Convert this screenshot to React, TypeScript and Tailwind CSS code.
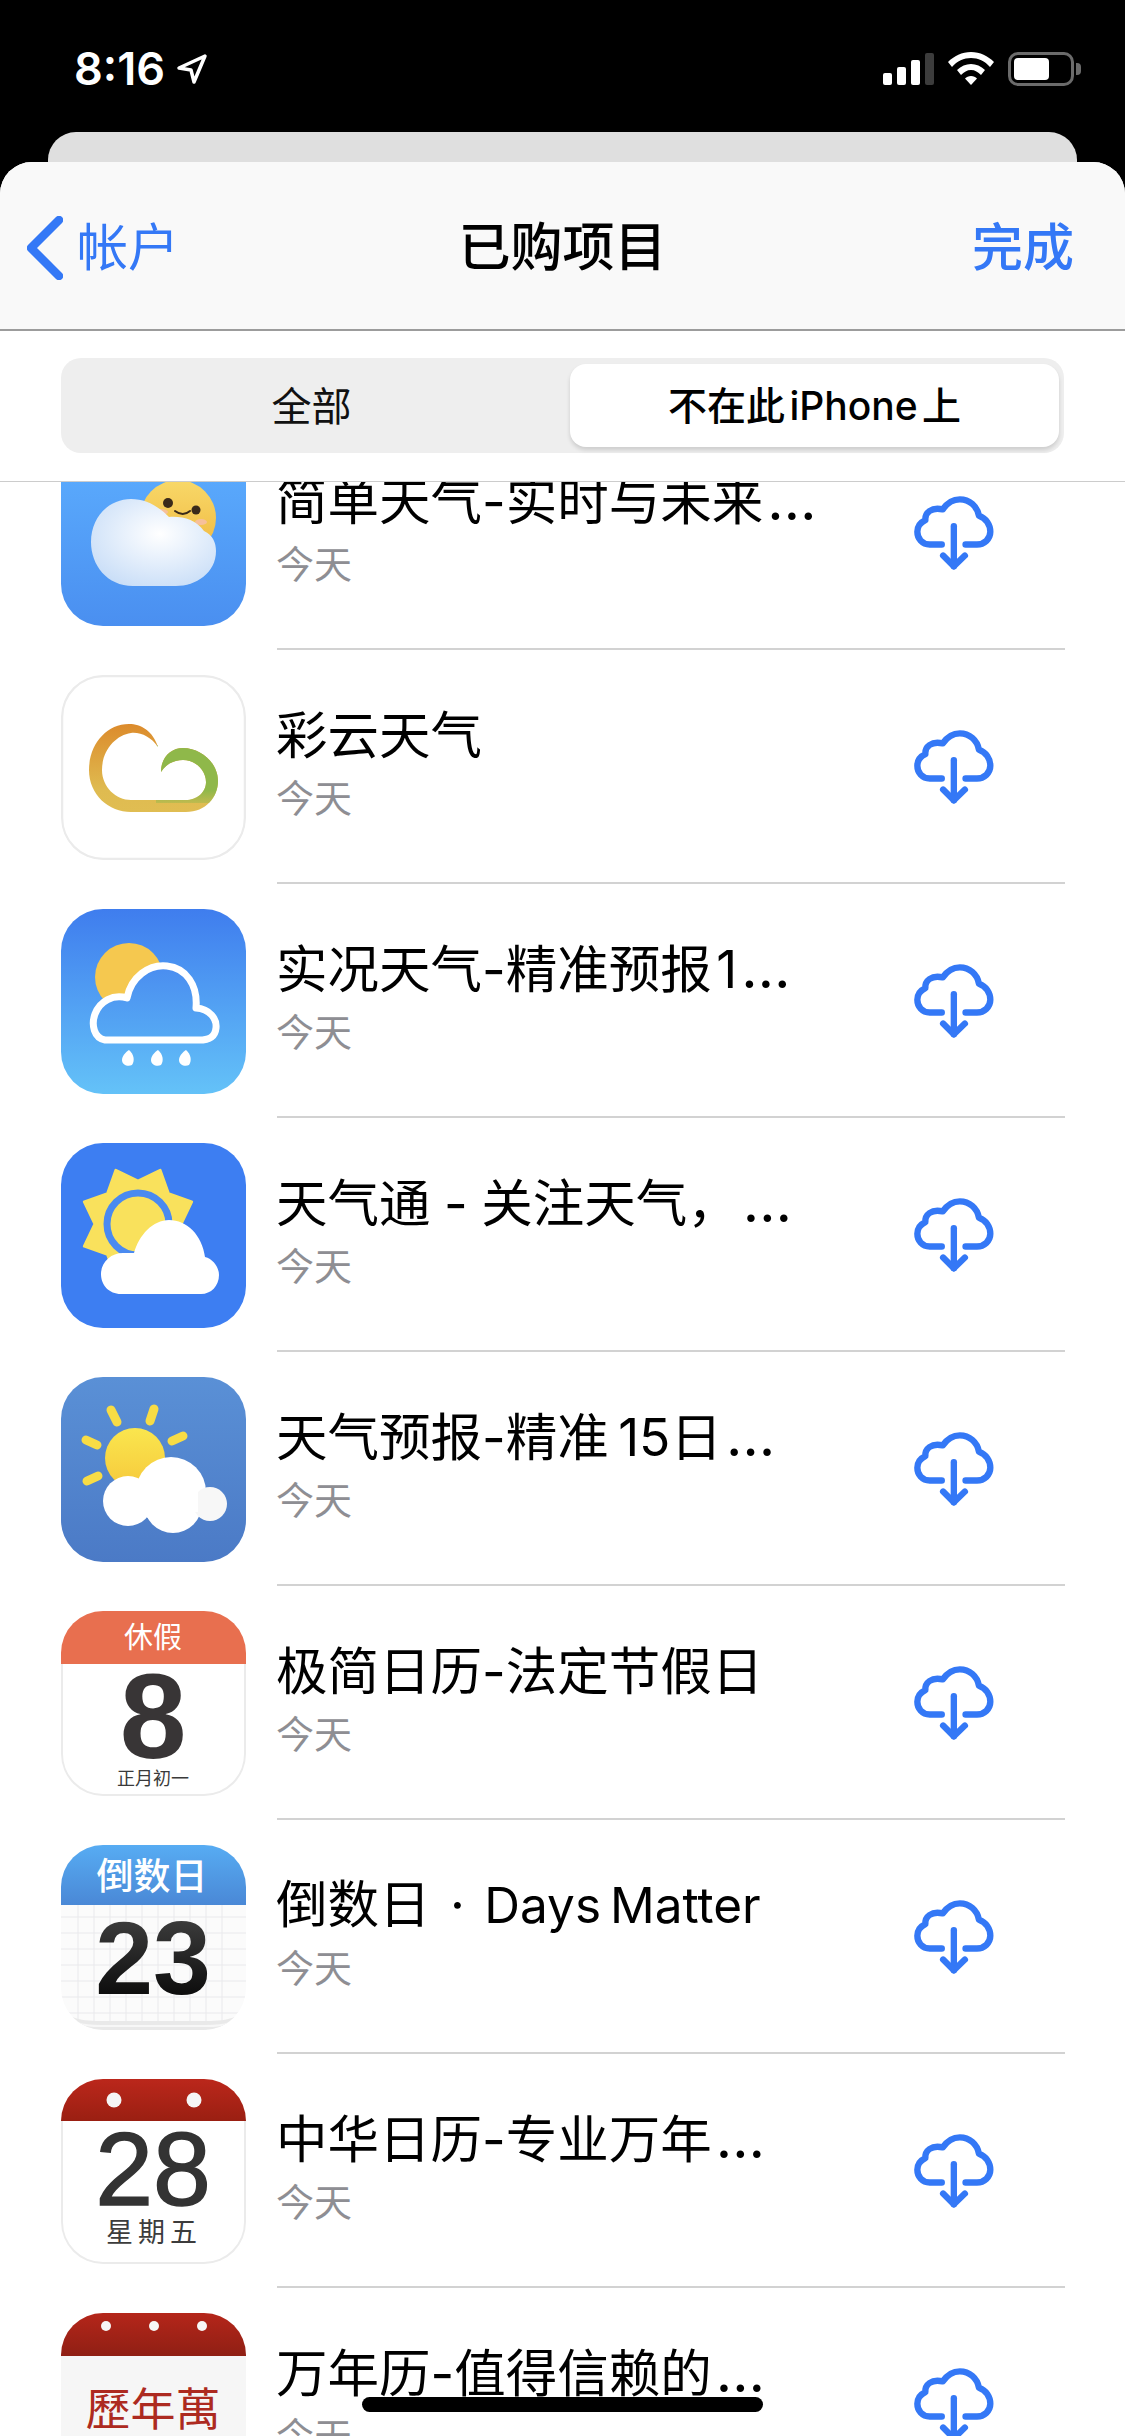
import React from "react";

const FONT = "Inter, 'Noto Sans CJK SC', sans-serif";
const CJK = "'Noto Sans CJK SC', sans-serif";
const LIB = "'Liberation Sans', sans-serif";

function Cloud3() {
  return (
    <path d="M44 131 C33 129 30 116 34 105 C39 92 52 85 66 89 C70 68 88 55 106 57 C125 59 137 76 135 99 C149 100 156 110 155 119 C154 129 147 131 138 131 Z" />
  );
}

function Edge({ top }: { top: number }) {
  return (
    <path d={`M0 ${top} L0 143 A42 42 0 0 0 42 185 L143 185 A42 42 0 0 0 185 143 L185 ${top}`} fill="none" stroke="#ebebeb" strokeWidth="4" />
  );
}

function Icon1() {
  return (
    <svg viewBox="0 0 185 185" className="w-full h-full block">
      <defs>
        <linearGradient id="i1" x1="0" y1="0" x2="0" y2="1"><stop offset="0" stopColor="#5dafff" /><stop offset="1" stopColor="#4a8ff0" /></linearGradient>
        <linearGradient id="i1s" x1="0" y1="0" x2="0" y2="1"><stop offset="0" stopColor="#f8d868" /><stop offset="1" stopColor="#f0b840" /></linearGradient>
        <radialGradient id="i1c" cx="0.55" cy="0.4" r="0.7"><stop offset="0" stopColor="#ffffff" /><stop offset="1" stopColor="#c6dcf7" /></radialGradient>
      </defs>
      <rect width="185" height="185" fill="url(#i1)" />
      <circle cx="117" cy="77" r="38" fill="url(#i1s)" />
      <circle cx="107" cy="62" r="5" fill="#3a2a1a" />
      <circle cx="135" cy="69" r="4.500" fill="#3a2a1a" />
      <path d="M114 70 Q122 76 129 70" fill="none" stroke="#3a2a1a" strokeWidth="2" strokeLinecap="round" />
      <ellipse cx="100" cy="71" rx="7" ry="3" fill="#f7c09a" />
      <ellipse cx="140" cy="81" rx="6" ry="3" fill="#f7c09a" />
      <path d="M30 101 C30 76 48 58 70 58 C84 58 96 64 108 76 C122 75 135 79 143 90 C152 94 155 102 155 110 C155 132 135 145 115 145 L72 145 C46 145 30 124 30 101 Z" fill="url(#i1c)" />
    </svg>
  );
}

function Icon2() {
  const d = "M97 72 C92 56 80 49 68 49 C45 49 28 70 28 95 C28 120 48 137 70 137 L125 137 C145 137 157 122 157 106 C157 88 140 73 122 73 C110 73 100 82 100 97 C106 88 114 85 122 85 C134 85 145 95 145 107 C145 118 135 125 125 125 L70 125 C55 125 41 112 41 95 C41 75 55 60 70 58 C80 57 90 62 97 72 Z";
  return (
    <svg viewBox="0 0 185 185" className="w-full h-full block">
      <defs>
        <linearGradient id="i2" x1="0" y1="0" x2="0" y2="1"><stop offset="0" stopColor="#dc8b2c" /><stop offset="0.75" stopColor="#dfbb50" /><stop offset="1" stopColor="#e0bd52" /></linearGradient>
        <linearGradient id="i2g" x1="0" y1="0" x2="0" y2="1"><stop offset="0" stopColor="#8fb84a" /><stop offset="0.75" stopColor="#8fb84a" /><stop offset="1" stopColor="#8fb84a" stopOpacity="0" /></linearGradient>
        <clipPath id="i2c"><rect x="95" y="70" width="70" height="58" /></clipPath>
      </defs>
      <rect width="185" height="185" fill="#fff" />
      <path d={d} fill="url(#i2)" />
      <g clipPath="url(#i2c)"><path d={d} fill="url(#i2g)" /></g>
      <rect x="1" y="1" width="183" height="183" rx="41" fill="none" stroke="#ebebeb" strokeWidth="2.500" />
    </svg>
  );
}

function Icon3() {
  const drop = (x: number) => `M${x} 141 C${x + 5} 145 ${x + 6} 152 ${x + 3} 156 C${x - 1} 158 ${x - 7} 156 ${x - 7} 151 C${x - 7} 147 ${x - 3} 143 ${x} 141 Z`;
  return (
    <svg viewBox="0 0 185 185" className="w-full h-full block">
      <defs>
        <linearGradient id="i3" x1="0" y1="0" x2="0" y2="1"><stop offset="0" stopColor="#3f7dee" /><stop offset="1" stopColor="#64c2f8" /></linearGradient>
        <linearGradient id="i3c" x1="0" y1="0" x2="0" y2="1"><stop offset="0" stopColor="#4a8df0" /><stop offset="1" stopColor="#56aaf4" /></linearGradient>
      </defs>
      <rect width="185" height="185" fill="url(#i3)" />
      <circle cx="68" cy="68" r="34" fill="#f5c84f" />
      <g fill="url(#i3c)" stroke="#fff" strokeWidth="7" strokeLinejoin="round"><Cloud3 /></g>
      <path d={drop(68)} fill="#fff" />
      <path d={drop(97)} fill="#fff" />
      <path d={drop(125)} fill="#fff" />
    </svg>
  );
}

function Icon4() {
  const pts: string[] = [];
  for (let i = 0; i < 16; i++) {
    const a = ((i * 22.5 - 112.5) * Math.PI) / 180;
    const r = i % 2 === 0 ? 58 : 43;
    pts.push(`${(77 + r * Math.cos(a)).toFixed(1)},${(81 + r * Math.sin(a)).toFixed(1)}`);
  }
  return (
    <svg viewBox="0 0 185 185" className="w-full h-full block">
      <rect width="185" height="185" fill="#3d7ef2" />
      <polygon points={pts.join(" ")} fill="#f9e15c" stroke="#f9e15c" strokeWidth="3" strokeLinejoin="round" />
      <circle cx="77" cy="81" r="31" fill="#f9e15c" stroke="#4a8af0" strokeWidth="7" />
      <path d="M60 151 C48 151 40 142 40 131 C40 119 50 110 62 110 L73 110 C78 92 92 77 108 77 C126 77 141 92 144 114 C152 116 158 124 158 132 C158 143 150 151 140 151 Z" fill="#fff" />
    </svg>
  );
}

function Icon5() {
  return (
    <svg viewBox="0 0 185 185" className="w-full h-full block">
      <defs>
        <linearGradient id="i5" x1="0" y1="0" x2="0" y2="1"><stop offset="0" stopColor="#5a90d6" /><stop offset="1" stopColor="#4b7ac6" /></linearGradient>
        <linearGradient id="i5s" x1="0" y1="0" x2="0" y2="1"><stop offset="0" stopColor="#fae64e" /><stop offset="1" stopColor="#f6c93c" /></linearGradient>
      </defs>
      <rect width="185" height="185" fill="url(#i5)" />
      <g stroke="#f8dc45" strokeWidth="9" strokeLinecap="round">
        <line x1="50" y1="33" x2="56" y2="45" />
        <line x1="93" y1="32" x2="89" y2="44" />
        <line x1="111" y1="64" x2="122" y2="59" />
        <line x1="25" y1="63" x2="36" y2="68" />
        <line x1="26" y1="104" x2="37" y2="99" />
      </g>
      <circle cx="74" cy="81" r="30" fill="url(#i5s)" />
      <g fill="#fff">
        <circle cx="67" cy="124" r="25" />
        <circle cx="110" cy="115" r="35" />
        <circle cx="112" cy="127" r="29" />
        <circle cx="149" cy="127" r="17" fill="#f7f7f7" />
        <rect x="75" y="115" width="62" height="20" />
      </g>
    </svg>
  );
}

function Icon6() {
  return (
    <svg viewBox="0 0 185 185" className="w-full h-full block">
      <rect width="185" height="185" fill="#fff" />
      <Edge top={53} />
      <rect width="185" height="53" fill="#e86f4f" />
      <text x="92" y="37" textAnchor="middle" fontSize="29" fill="#fff" fontFamily={CJK}>休假</text>
      <text x="92" y="147" textAnchor="middle" fontSize="120" fontWeight="700" fill="#383536" fontFamily={LIB}>8</text>
      <text x="92" y="174" textAnchor="middle" fontSize="18" fill="#3a3a3a" fontFamily={CJK}>正月初一</text>
    </svg>
  );
}

function Icon7() {
  const xs = [17, 33, 49, 65, 81, 97, 113, 129, 145, 161];
  const ys = [72, 88, 104, 120, 136, 152, 168];
  return (
    <svg viewBox="0 0 185 185" className="w-full h-full block">
      <defs>
        <linearGradient id="i7" x1="0" y1="0" x2="0" y2="1"><stop offset="0" stopColor="#57acf3" /><stop offset="1" stopColor="#4a88d6" /></linearGradient>
        <linearGradient id="i7t" x1="0" y1="0" x2="0" y2="1"><stop offset="0" stopColor="#484848" /><stop offset="1" stopColor="#000" /></linearGradient>
      </defs>
      <rect width="185" height="185" fill="#fbfbfb" />
      <g stroke="#e9e9ec" strokeWidth="1">
        {xs.map((x) => <line key={x} x1={x} y1="60" x2={x} y2="185" />)}
        {ys.map((y) => <line key={y} x1="0" y1={y} x2="185" y2={y} />)}
      </g>
      <rect width="185" height="60" fill="url(#i7)" />
      <text x="91" y="45" textAnchor="middle" fontSize="37" fontWeight="500" fill="#fff" fontFamily={CJK}>倒数日</text>
      <text x="92" y="149" textAnchor="middle" fontSize="104" fontWeight="700" fill="url(#i7t)" fontFamily={LIB}>23</text>
      <path d="M0 160 C4 172 16 176 40 176 L145 176 C169 176 181 172 185 160 L185 185 L0 185 Z" fill="#e9e9e9" />
      <path d="M4 168 C10 178 20 181 40 181 L145 181 C165 181 175 178 181 168" fill="none" stroke="#f7f7f7" strokeWidth="2" />
    </svg>
  );
}

function Icon8() {
  return (
    <svg viewBox="0 0 185 185" className="w-full h-full block">
      <defs>
        <linearGradient id="i8" x1="0" y1="0" x2="0" y2="1"><stop offset="0" stopColor="#bb271b" /><stop offset="1" stopColor="#9a1f12" /></linearGradient>
      </defs>
      <rect width="185" height="185" fill="#fff" />
      <Edge top={42} />
      <rect width="185" height="42" fill="url(#i8)" />
      <circle cx="53" cy="21" r="7.500" fill="#f5f5f5" />
      <circle cx="133" cy="21" r="7.500" fill="#f5f5f5" />
      <text x="92" y="126" textAnchor="middle" fontSize="104" fill="#333" fontFamily={LIB} stroke="#333" strokeWidth="1.500">28</text>
      <text x="93" y="163" textAnchor="middle" fontSize="27" letterSpacing="5" fill="#3c3c3c" fontFamily={CJK}>星期五</text>
    </svg>
  );
}

function Icon9() {
  return (
    <svg viewBox="0 0 185 185" className="w-full h-full block">
      <defs>
        <linearGradient id="i9" x1="0" y1="0" x2="0" y2="1"><stop offset="0" stopColor="#b5261a" /><stop offset="1" stopColor="#8f1f14" /></linearGradient>
      </defs>
      <rect width="185" height="185" fill="#f6f6f6" />
      <rect width="185" height="43" fill="url(#i9)" />
      <circle cx="45" cy="13" r="5" fill="#f7f7f7" />
      <circle cx="93" cy="13" r="5" fill="#f7f7f7" />
      <circle cx="141" cy="13" r="5" fill="#f7f7f7" />
      <text x="92" y="113" textAnchor="middle" fontSize="45" fill="#ad2a20" fontFamily={CJK}>歷年萬</text>
    </svg>
  );
}

function DownloadIcon() {
  return (
    <svg viewBox="100 45 245 227" className="w-[82px] h-[76px] block mt-[2px]" fill="none" stroke="#3478f6" strokeWidth="19" strokeLinecap="round" strokeLinejoin="round">
      <path d="M186 193 L150 193 C127 193 113 175 113 155 C113 139 122 127 137 120 C135 98 155 80 189 88 C204 66 222 58 240 58 C268 58 292 78 297 107 C318 114 331 134 331 155 C331 176 313 193 291 193 L257 193" />
      <path d="M222 138 L222 258" />
      <path d="M190 226 L222 258 L255 226" />
    </svg>
  );
}

const rows: { title: React.ReactNode; more: boolean; ws: string; Icon: () => React.ReactElement }[] = [
  { title: "简单天气-实时与未来", more: true, ws: "[word-spacing:-5px]", Icon: Icon1 },
  { title: "彩云天气", more: false, ws: "[word-spacing:-5px]", Icon: Icon2 },
  { title: "实况天气-精准预报\u200A1", more: true, ws: "[word-spacing:-5px]", Icon: Icon3 },
  { title: "天气通 - 关注天气，", more: true, ws: "[word-spacing:-1px]", Icon: Icon4 },
  { title: "天气预报-精准 15日", more: true, ws: "[word-spacing:-5px]", Icon: Icon5 },
  { title: "极简日历-法定节假日", more: false, ws: "[word-spacing:-5px]", Icon: Icon6 },
  {
    title: (
      <>
        倒数日 · <span className="text-[49.5px] [word-spacing:-5px]">Days Matter</span>
      </>
    ),
    more: false,
    ws: "[word-spacing:5px]",
    Icon: Icon7,
  },
  { title: "中华日历-专业万年", more: true, ws: "[word-spacing:-5px]", Icon: Icon8 },
  { title: "万年历-值得信赖的", more: true, ws: "[word-spacing:-5px]", Icon: Icon9 },
];

export default function App() {
  return (
    <div className="relative w-[1125px] h-[2436px] overflow-hidden bg-black" style={{ fontFamily: FONT }}>
      {/* status bar */}
      <div className="h-[132px] flex items-start justify-between pt-[46px] pl-[74px] pr-[44px] text-white">
        <div className="flex items-center gap-[11px]">
          <span className="text-[45px] leading-[45px] font-semibold">8:16</span>
          <svg width="32" height="32" viewBox="0 0 32 32" fill="none" stroke="#fff" strokeWidth="3.5" strokeLinejoin="round" className="block">
            <path d="M29 3 L3 15 L15 17 L18 29 Z" />
          </svg>
        </div>
        <div className="flex items-start gap-[14px] pt-[6px]">
          <div className="flex items-end gap-[5px] h-[33px]">
            <div className="w-[9px] h-[12px] rounded-[2px] bg-white" />
            <div className="w-[9px] h-[18px] rounded-[2px] bg-white" />
            <div className="w-[9px] h-[25px] rounded-[2px] bg-white" />
            <div className="w-[9px] h-[32px] rounded-[2px] bg-[#3c3c3c]" />
          </div>
          <svg width="46" height="33" viewBox="0 0 46 33" className="block" fill="#fff">
            <path d="M23 0 C32 0 40 4 46 10 L42 15 C37 9 30 6 23 6 C16 6 9 9 4 15 L0 10 C6 4 14 0 23 0 Z" />
            <path d="M23 12 C28 12 33 14 37 18 L33 23 C30 20 27 18 23 18 C19 18 16 20 13 23 L9 18 C13 14 18 12 23 12 Z" />
            <path d="M23 24 C25.5 24 27.5 25 29 26.5 L23 33 L17 26.5 C18.500 25 20.500 24 23 24 Z" />
          </svg>
          <div className="flex items-center gap-[2px]">
            <div className="w-[66px] h-[34px] rounded-[10px] border-[3px] border-[#6b6b6b] p-[3px]">
              <div className="w-[35px] h-full rounded-[4px] bg-white" />
            </div>
            <div className="w-[5px] h-[12px] rounded-r-[4px] bg-[#6b6b6b]" />
          </div>
        </div>
      </div>

      {/* card behind */}
      <div className="mx-[48px] h-[30px] rounded-t-[28px] bg-[#dfdfdf]" />

      {/* sheet */}
      <div className="relative h-[2274px] rounded-t-[32px] overflow-hidden bg-white">
        <div className="h-[169px] bg-[#f9f9f9] border-b-2 border-[#9c9c9c] flex items-center pl-[27px] pr-[51px] pt-[4px]">
          <div className="flex-1 flex items-center gap-[14px] text-[#3478f6] text-[51px] leading-[60px]">
            <svg width="36" height="64" viewBox="0 0 36 64" fill="none" stroke="#3478f6" strokeWidth="8.500" strokeLinecap="round" strokeLinejoin="round" className="block">
              <path d="M32 4 L4 32 L32 60" />
            </svg>
            <span>帐户</span>
          </div>
          <span className="text-[52px] leading-[60px] font-medium text-black ml-[24px]">已购项目</span>
          <div className="flex-1 flex justify-end">
            <span className="text-[51px] leading-[60px] font-medium text-[#3478f6]">完成</span>
          </div>
        </div>

        <div className="h-[151px] bg-white px-[61px] pt-[27px] border-b border-[#cccccc]">
          <div className="h-[95px] rounded-[20px] bg-[#eeeeee] flex items-stretch pl-[6px] pr-[5px] py-[6px]">
            <div className="flex-1 flex items-center justify-center text-[40px] text-[#111] pr-[14px] pt-[2px]">全部</div>
            <div className="w-[489px] flex items-center justify-center rounded-[16px] bg-white shadow-[0_3px_4px_rgba(0,0,0,0.14)] text-[39px] font-medium text-black [word-spacing:-6px] pt-[2px]">
              不在此 iPhone 上
            </div>
          </div>
        </div>

        <div className="overflow-hidden h-[1954px]">
          <div className="-mt-[66px]">
            {rows.map(({ title, more, ws, Icon }, i) => (
              <div key={i} className="flex items-center h-[234px] pl-[61px] pr-[60px]">
                <div className="w-[185px] h-[185px] shrink-0 rounded-[42px] overflow-hidden">
                  <Icon />
                </div>
                <div className="ml-[31px] flex-1 h-full flex items-center justify-between border-b-2 border-[#d2d2d2] pr-[70px]">
                  <div className="flex flex-col pb-[7px] -ml-[1px]">
                    <span className={`text-[51.5px] leading-[70px] text-black whitespace-nowrap ${ws}`}>
                      {title}
                      {more && <span className="ml-[4px] text-[57px] leading-none">…</span>}
                    </span>
                    <span className="text-[38px] leading-[56px] text-[#8e8e93]">今天</span>
                  </div>
                  <DownloadIcon />
                </div>
              </div>
            ))}
          </div>
        </div>
      </div>

      {/* home indicator */}
      <div className="absolute left-[362px] top-[2397px] w-[401px] h-[15px] rounded-full bg-black" />
    </div>
  );
}
